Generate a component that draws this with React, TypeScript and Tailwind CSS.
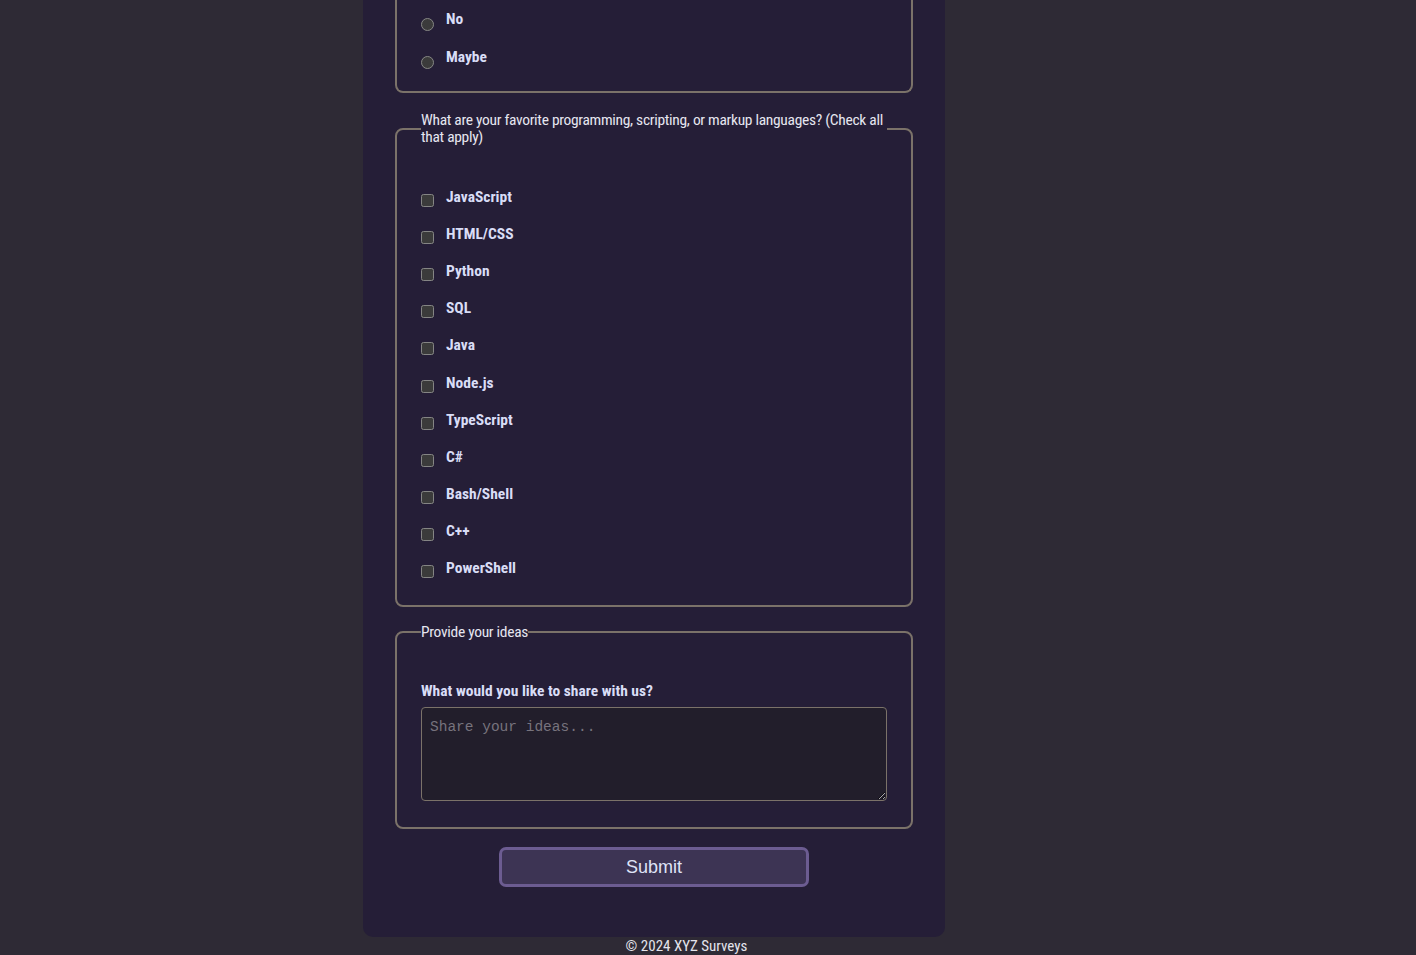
import React from 'react';

const languages = [
  'JavaScript',
  'HTML/CSS',
  'Python',
  'SQL',
  'Java',
  'Node.js',
  'TypeScript',
  'C#',
  'Bash/Shell',
  'C++',
  'PowerShell',
];

// narrow grotesque face, close to Arial Narrow
const narrow = "font-['Roboto',sans-serif] [font-stretch:75%]";

const Option: React.FC<{ type: 'radio' | 'checkbox'; name: string; label: string }> = ({ type, name, label }) => (
  <label className={`flex items-start ${type === 'radio' ? 'h-[37.8px]' : 'h-[37.2px]'}`}>
    <input
      type={type}
      name={name}
      value={label}
      className={`m-0 h-[13px] w-[13px] shrink-0 [color-scheme:dark] ${type === 'radio' ? 'mt-[8px]' : 'mt-[6px]'}`}
    />
    <span className="mt-[1px] ml-[12px] text-[15.5px] leading-[17px] font-bold text-[#d9ddf6]">{label}</span>
  </label>
);

export default function App() {
  return (
    <div className={`min-h-screen bg-[#2e2a35] ${narrow}`}>
      <div className="ml-[363px] w-[582px] rounded-b-[10px] bg-[#251e37] px-8 pb-[50px]">
        <form onSubmit={(e) => e.preventDefault()}>
          {/* tail of the previous question, scrolled past its top */}
          <fieldset className="mb-[19px] rounded-b-[8px] border-2 border-t-0 border-[#7b7269] px-[24px] pt-[10px] pb-[5px]">
            <Option type="radio" name="recommend" label="No" />
            <Option type="radio" name="recommend" label="Maybe" />
          </fieldset>

          <fieldset className="mb-[17px] rounded-[8px] border-2 border-[#7b7269] px-[24px] pt-[42px] pb-[8px]">
            <legend className="text-[15.5px] leading-[17px] tracking-[-0.3px] text-[#e6e6f0]">
              What are your favorite programming, scripting, or markup languages? (Check all that apply)
            </legend>
            {languages.map((lang) => (
              <Option key={lang} type="checkbox" name="languages" label={lang} />
            ))}
          </fieldset>

          <fieldset className="mb-[18px] rounded-[8px] border-2 border-[#7b7269] px-[24px] pt-[41px] pb-[26px]">
            <legend className="text-[15.5px] leading-[17px] tracking-[-0.3px] text-[#e6e6f0]">Provide your ideas</legend>
            <label htmlFor="ideas" className="mb-[7px] block pt-[1px] text-[15.5px] leading-[17px] font-bold text-[#d9ddf6]">
              What would you like to share with us?
            </label>
            <textarea
              id="ideas"
              placeholder="Share your ideas..."
              className="block h-[94px] w-full rounded-[4px] border border-[#7b7269] bg-[#221e2b] px-[8px] pt-[9px] font-['Liberation_Mono',monospace] [font-stretch:normal] text-[14.5px] text-[#d9ddf6] placeholder:text-[#77737d]"
            />
          </fieldset>

          <div className="flex justify-center">
            <button
              type="submit"
              className="h-[40px] w-[310px] rounded-[7px] border-[3px] border-[#6c5c91] bg-[#3d3454] pt-[2px] font-['Liberation_Sans',sans-serif] [font-stretch:normal] text-[18px] text-[#dfe3f7]"
            >
              Submit
            </button>
          </div>
        </form>
      </div>
      <footer className="ml-[363px] w-[582px] pt-[1px] pl-[65px] text-center text-[15px] leading-[17px] text-[#e4e4ec]">
        © 2024 XYZ Surveys
      </footer>
    </div>
  );
}
